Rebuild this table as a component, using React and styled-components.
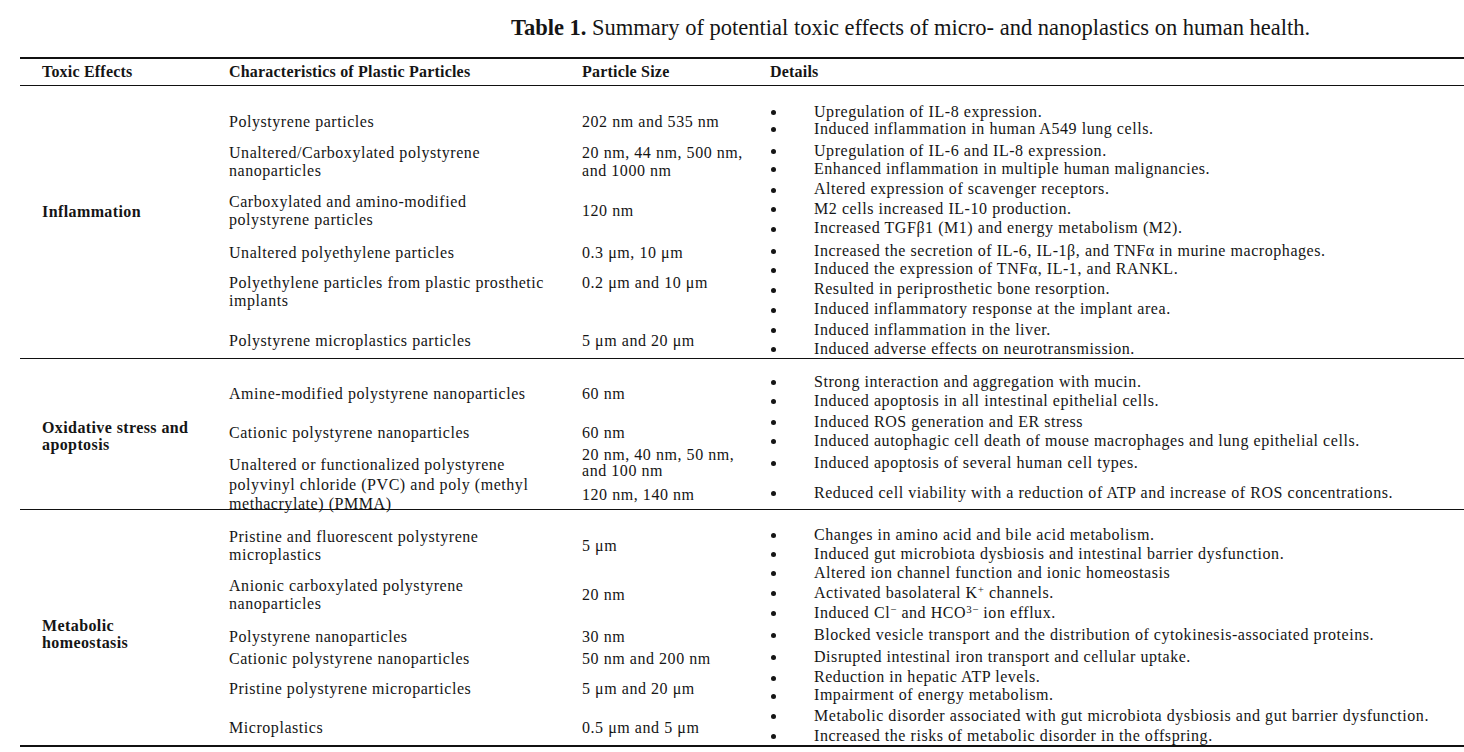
import styled, { createGlobalStyle } from "styled-components";

const GlobalStyle = createGlobalStyle`
  html, body {
    margin: 0;
    padding: 0;
    background: #fff;
  }
  body {
    font-family: "Liberation Serif", "Times New Roman", serif;
    color: #151515;
    overflow: hidden;
  }
`;

const Sup = styled.sup`
  font-size: 0.68em;
  line-height: 0;
  vertical-align: 0.5em;
`;

const sections = [
  {
    label: ["Inflammation"],
    labelTop: 117,
    padTop: 14,
    rows: [
      {
        h: 39,
        char: ["Polystyrene particles"],
        subs: [{ size: ["202 nm and 535 nm"], lh: 17, details: ["Upregulation of IL-8 expression.", "Induced inflammation in human A549 lung cells."] }],
      },
      {
        h: 39,
        char: ["Unaltered/Carboxylated polystyrene", "nanoparticles"],
        subs: [{ size: ["20 nm, 44 nm, 500 nm,", "and 1000 nm"], lh: 18, details: ["Upregulation of IL-6 and IL-8 expression.", "Enhanced inflammation in multiple human malignancies."] }],
      },
      {
        h: 61,
        char: ["Carboxylated and amino-modified", "polystyrene particles"],
        subs: [
          {
            size: ["120 nm"],
            lh: 19.5,
            details: [
              "Altered expression of scavenger receptors.",
              "M2 cells increased IL-10 production.",
              "Increased TGFβ1 (M1) and energy metabolism (M2).",
            ],
          },
        ],
      },
      {
        h: 20,
        char: ["Unaltered polyethylene particles"],
        subs: [{ size: ["0.3 μm, 10 μm"], lh: 19, details: ["Increased the secretion of IL-6, IL-1β, and TNFα in murine macrophages."] }],
      },
      {
        h: 60,
        char: ["Polyethylene particles from plastic prosthetic", "implants"],
        subs: [
          {
            size: ["0.2 μm and 10 μm"],
            sizeUp: 18,
            lh: 20,
            details: [
              "Induced the expression of TNFα, IL-1, and RANKL.",
              "Resulted in periprosthetic bone resorption.",
              "Induced inflammatory response at the implant area.",
            ],
          },
        ],
      },
      {
        h: 39,
        char: ["Polystyrene microplastics particles"],
        subs: [{ size: ["5 μm and 20 μm"], lh: 19, details: ["Induced inflammation in the liver.", "Induced adverse effects on neurotransmission."] }],
      },
    ],
  },
  {
    label: ["Oxidative stress and", "apoptosis"],
    labelTop: 60,
    padTop: 12,
    rows: [
      {
        h: 40,
        char: ["Amine-modified polystyrene nanoparticles"],
        subs: [{ size: ["60 nm"], lh: 19, details: ["Strong interaction and aggregation with mucin.", "Induced apoptosis in all intestinal epithelial cells."] }],
      },
      {
        h: 39,
        char: ["Cationic polystyrene nanoparticles"],
        subs: [
          {
            size: ["60 nm"],
            lh: 19,
            details: ["Induced ROS generation and ER stress", "Induced autophagic cell death of mouse macrophages and lung epithelial cells."],
          },
        ],
      },
      {
        h: 59,
        charTop: true,
        char: ["Unaltered or functionalized polystyrene", "polyvinyl chloride (PVC) and poly (methyl", "methacrylate) (PMMA)"],
        subs: [
          { h: 25, size: ["20 nm, 40 nm, 50 nm,", "and 100 nm"], sizeLh: 16, sizeUp: 5, lh: 19, details: ["Induced apoptosis of several human cell types."] },
          { h: 34, size: ["120 nm, 140 nm"], lh: 19, details: ["Reduced cell viability with a reduction of ATP and increase of ROS concentrations."] },
        ],
      },
    ],
  },
  {
    label: ["Metabolic", "homeostasis"],
    labelTop: 107,
    padTop: 13,
    last: true,
    rows: [
      {
        h: 39,
        char: ["Pristine and fluorescent polystyrene", "microplastics"],
        subs: [{ size: ["5 μm"], lh: 19, details: ["Changes in amino acid and bile acid metabolism.", "Induced gut microbiota dysbiosis and intestinal barrier dysfunction."] }],
      },
      {
        h: 61,
        char: ["Anionic carboxylated polystyrene", "nanoparticles"],
        subs: [
          {
            size: ["20 nm"],
            lh: 20,
            details: [
              "Altered ion channel function and ionic homeostasis",
              <>Activated basolateral K<Sup>+</Sup> channels.</>,
              <>Induced Cl<Sup>−</Sup> and HCO<Sup>3−</Sup> ion efflux.</>,
            ],
          },
        ],
      },
      {
        h: 22,
        char: ["Polystyrene nanoparticles"],
        subs: [{ size: ["30 nm"], lh: 19, details: ["Blocked vesicle transport and the distribution of cytokinesis-associated proteins."] }],
      },
      {
        h: 21,
        char: ["Cationic polystyrene nanoparticles"],
        subs: [{ size: ["50 nm and 200 nm"], lh: 19, details: ["Disrupted intestinal iron transport and cellular uptake."] }],
      },
      {
        h: 40,
        char: ["Pristine polystyrene microparticles"],
        subs: [{ size: ["5 μm and 20 μm"], lh: 18, details: ["Reduction in hepatic ATP levels.", "Impairment of energy metabolism."] }],
      },
      {
        h: 39,
        char: ["Microplastics"],
        subs: [
          {
            size: ["0.5 μm and 5 μm"],
            lh: 20,
            details: [
              "Metabolic disorder associated with gut microbiota dysbiosis and gut barrier dysfunction.",
              "Increased the risks of metabolic disorder in the offspring.",
            ],
          },
        ],
      },
    ],
  },
];

export default function App() {
  return (
    <Page>
      <GlobalStyle />
      <Caption>
        <CaptionLabel>Table 1.</CaptionLabel> Summary of potential toxic effects of micro- and nanoplastics on human health.
      </Caption>
      <Table>
        <HeaderRow>
          <HeaderCell $pad={22}>Toxic Effects</HeaderCell>
          <HeaderCell>Characteristics of Plastic Particles</HeaderCell>
          <HeaderCell>Particle Size</HeaderCell>
          <HeaderCell>Details</HeaderCell>
        </HeaderRow>
        {sections.map((sec, si) => (
          <Section key={si} $padTop={sec.padTop} $last={sec.last}>
            <EffectLabel $top={sec.labelTop - sec.padTop}>
              {sec.label.map((l) => (
                <div key={l}>{l}</div>
              ))}
            </EffectLabel>
            <Rows>
              {sec.rows.map((row, ri) => (
                <Row key={ri} $h={row.h} $subs={row.subs.map((s) => (s.h ? `${s.h}px` : "1fr")).join(" ")}>
                  <CharCell $start={row.charTop} $lh={row.charTop ? 19.5 : 18}>
                    {row.char.map((c) => (
                      <div key={c}>{c}</div>
                    ))}
                  </CharCell>
                  {row.subs.map((sub, k) => (
                    <SubGroup key={k} $row={k + 1}>
                      <SizeCell $up={sub.sizeUp} $lh={sub.sizeLh || 18}>
                        {sub.size.map((s) => (
                          <div key={s}>{s}</div>
                        ))}
                      </SizeCell>
                      <DetailList>
                        {sub.details.map((d, di) => (
                          <DetailItem key={di} $lh={sub.lh}>
                            <Bullet />
                            <span>{d}</span>
                          </DetailItem>
                        ))}
                      </DetailList>
                    </SubGroup>
                  ))}
                </Row>
              ))}
            </Rows>
          </Section>
        ))}
      </Table>
    </Page>
  );
}

const Page = styled.div`
  width: 1464px;
  height: 752px;
  background: #fff;
  overflow: hidden;
`;

const Caption = styled.div`
  padding: 16px 0 0 511px;
  margin-bottom: 17px;
  font-size: 22.5px;
  line-height: 24px;
  white-space: nowrap;
`;

const CaptionLabel = styled.span`
  font-weight: 700;
`;

const Table = styled.div`
  margin-left: 20px;
  border-top: 2px solid #111;
  border-bottom: 2px solid #111;
`;

const HeaderRow = styled.div`
  display: grid;
  grid-template-columns: 209px 353px 188px 1fr;
  align-items: center;
  height: 26px;
  border-bottom: 1px solid #111;
`;

const HeaderCell = styled.div`
  padding-left: ${(p) => p.$pad || 0}px;
  font-size: 16px;
  font-weight: 700;
  letter-spacing: 0.2px;
  white-space: nowrap;
`;

const Section = styled.div`
  display: grid;
  grid-template-columns: 209px 1fr;
  padding-top: ${(p) => p.$padTop}px;
  border-bottom: ${(p) => (p.$last ? "none" : "1px solid #111")};
`;

const EffectLabel = styled.div`
  align-self: start;
  padding: ${(p) => p.$top}px 0 0 22px;
  font-size: 16px;
  font-weight: 700;
  letter-spacing: 0.4px;
  line-height: 17px;
`;

const Rows = styled.div`
  display: flex;
  flex-direction: column;
`;

const Row = styled.div`
  display: grid;
  grid-template-columns: 353px 1fr;
  grid-template-rows: ${(p) => p.$subs};
  height: ${(p) => p.$h}px;
  font-size: 16px;
  letter-spacing: 0.55px;
`;

const CharCell = styled.div`
  grid-column: 1;
  grid-row: 1 / -1;
  align-self: ${(p) => (p.$start ? "start" : "center")};
  padding-top: 5px;
  line-height: ${(p) => p.$lh}px;
  white-space: nowrap;
`;

const SubGroup = styled.div`
  grid-column: 2;
  grid-row: ${(p) => p.$row};
  display: grid;
  grid-template-columns: 188px 1fr;
  grid-template-rows: minmax(0, 1fr);
  align-items: center;
  min-height: 0;
`;

const SizeCell = styled.div`
  padding-top: 5px;
  margin-bottom: ${(p) => p.$up || 0}px;
  line-height: ${(p) => p.$lh}px;
  white-space: nowrap;
`;

const DetailList = styled.ul`
  margin: 0;
  padding: 0;
  list-style: none;
`;

const DetailItem = styled.li`
  display: grid;
  grid-template-columns: 44px 1fr;
  align-items: center;
  line-height: ${(p) => p.$lh}px;
  white-space: nowrap;
`;

const Bullet = styled.span`
  width: 5px;
  height: 5px;
  margin: 2px 0 0 1px;
  border-radius: 50%;
  background: #151515;
`;
